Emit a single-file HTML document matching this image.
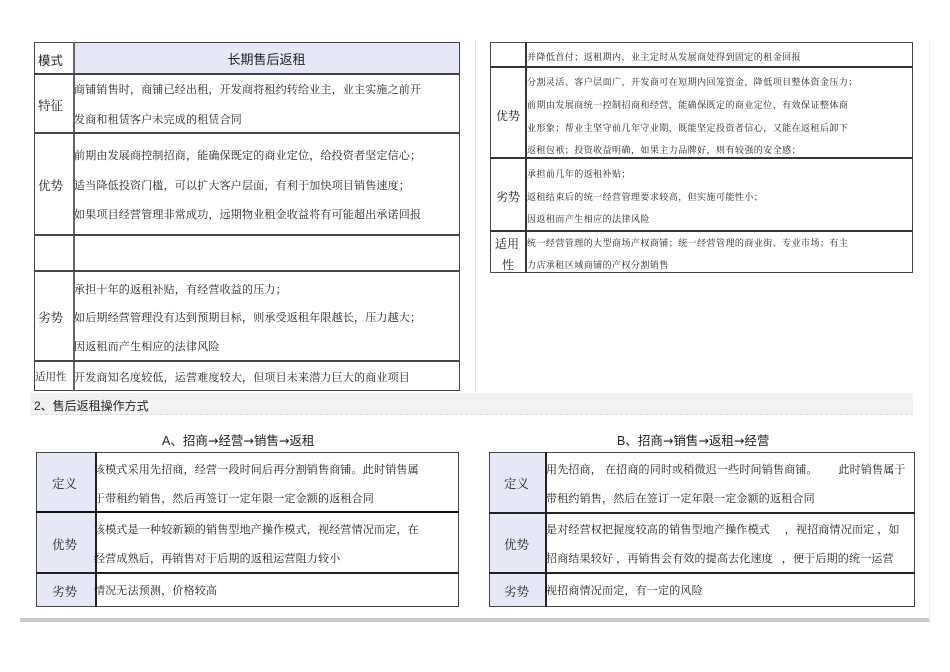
<!DOCTYPE html><html><head><meta charset="utf-8"><style>
body{margin:0;width:950px;height:672px;background:#fff;position:relative;overflow:hidden;font-family:"Liberation Serif","Noto Serif CJK SC",serif;color:#222}
.a{position:absolute;white-space:nowrap}
.b{position:absolute;border:1px solid #444;box-sizing:border-box}
.t{font-size:11px;letter-spacing:0.2px}
.s{font-size:9px;letter-spacing:0.45px}
.l{font-size:12.5px}
.h{font-family:"Liberation Sans","Noto Sans CJK SC",sans-serif}
</style></head><body>
<div class="a" style="left:475px;top:40px;width:1px;height:352px;background:#e6e6e6"></div>
<div class="b" style="left:34px;top:42px;width:426px;height:349px;border-width:1.5px"></div>
<div class="a" style="left:74px;top:43px;width:385px;height:30px;background:#e6e8f8"></div>
<div class="a" style="left:73px;top:42px;width:1.5px;height:349px;background:#666"></div>
<div class="a" style="left:34px;top:73px;width:426px;height:1.5px;background:#444"></div>
<div class="a" style="left:34px;top:132px;width:426px;height:1.5px;background:#444"></div>
<div class="a" style="left:34px;top:234px;width:426px;height:1.5px;background:#444"></div>
<div class="a" style="left:34px;top:270px;width:426px;height:1.5px;background:#444"></div>
<div class="a" style="left:34px;top:360px;width:426px;height:1.5px;background:#444"></div>
<div class="a l h" style="left:38px;top:50px">模式</div>
<div class="a h" style="left:74px;width:385px;top:49px;text-align:center;font-size:13px">长期售后返租</div>
<div class="a l" style="left:38px;top:96px">特征</div>
<div class="a t" style="left:74px;top:81px">商铺销售时，商铺已经出租，开发商将租约转给业主，业主实施之前开</div>
<div class="a t" style="left:74px;top:111px">发商和租赁客户未完成的租赁合同</div>
<div class="a l" style="left:38px;top:176px">优势</div>
<div class="a t" style="left:74px;top:147px">前期由发展商控制招商，能确保既定的商业定位，给投资者坚定信心；</div>
<div class="a t" style="left:74px;top:177px">适当降低投资门槛，可以扩大客户层面，有利于加快项目销售速度；</div>
<div class="a t" style="left:74px;top:206px">如果项目经营管理非常成功，远期物业租金收益将有可能超出承诺回报</div>
<div class="a l" style="left:38px;top:308px">劣势</div>
<div class="a t" style="left:74px;top:281px">承担十年的返租补贴，有经营收益的压力；</div>
<div class="a t" style="left:74px;top:309px">如后期经营管理没有达到预期目标，则承受返租年限越长，压力越大；</div>
<div class="a t" style="left:74px;top:338px">因返租而产生相应的法律风险</div>
<div class="a" style="left:35px;top:369px;font-size:10.5px">适用性</div>
<div class="a t" style="left:74px;top:369px">开发商知名度较低，运营难度较大，但项目未来潜力巨大的商业项目</div>
<div class="b" style="left:490px;top:42px;width:423px;height:231px;border-width:1.5px"></div>
<div class="a" style="left:525px;top:42px;width:1.5px;height:231px;background:#333"></div>
<div class="a" style="left:490px;top:66px;width:423px;height:1.5px;background:#333"></div>
<div class="a" style="left:490px;top:157px;width:423px;height:1.5px;background:#333"></div>
<div class="a" style="left:490px;top:230px;width:423px;height:1.5px;background:#333"></div>
<div class="a s" style="left:527px;top:50px">并降低首付；返租期内，业主定时从发展商处得到固定的租金回报</div>
<div class="a s" style="left:527px;top:75px">分割灵活、客户层面广，开发商可在短期内回笼资金，降低项目整体资金压力；</div>
<div class="a s" style="left:527px;top:98px">前期由发展商统一控制招商和经营，能确保既定的商业定位，有效保证整体商</div>
<div class="a s" style="left:527px;top:121px">业形象；帮业主坚守前几年守业期，既能坚定投资者信心，又能在返租后卸下</div>
<div class="a s" style="left:527px;top:143px">返租包袱；投资收益明确，如果主力品牌好，则有较强的安全感；</div>
<div class="a l" style="left:496px;top:107px;font-size:12px">优势</div>
<div class="a s" style="left:527px;top:167px">承担前几年的返租补贴；</div>
<div class="a s" style="left:527px;top:190px">返租结束后的统一经营管理要求较高，但实施可能性小；</div>
<div class="a s" style="left:527px;top:212px">因返租而产生相应的法律风险</div>
<div class="a l" style="left:496px;top:188px;font-size:12px">劣势</div>
<div class="a l" style="left:495px;top:235px;font-size:12px">适用</div>
<div class="a l" style="left:502px;top:256px;font-size:12px">性</div>
<div class="a s" style="left:527px;top:236px">统一经营管理的大型商场产权商铺；统一经营管理的商业街、专业市场；有主</div>
<div class="a s" style="left:527px;top:258px">力店承租区域商铺的产权分割销售</div>
<div class="a" style="left:30px;top:393px;width:883px;height:21px;background:#f2f2f2;border-bottom:1px dashed #ddd"></div>
<div class="a h" style="left:34px;top:397px;font-size:12px">2、售后返租操作方式</div>
<div class="a h" style="left:162px;top:430px;font-size:12.5px">A、招商<span style="font-family:'DejaVu Sans'">→</span>经营<span style="font-family:'DejaVu Sans'">→</span>销售<span style="font-family:'DejaVu Sans'">→</span>返租</div>
<div class="a h" style="left:617px;top:430px;font-size:12.5px">B、招商<span style="font-family:'DejaVu Sans'">→</span>销售<span style="font-family:'DejaVu Sans'">→</span>返租<span style="font-family:'DejaVu Sans'">→</span>经营</div>
<div class="b" style="left:36px;top:452px;width:423px;height:155px"></div>
<div class="a" style="left:37px;top:453px;width:58px;height:153px;background:#e6e8f8"></div>
<div class="a" style="left:95px;top:452px;width:1.5px;height:155px;background:#222"></div>
<div class="a" style="left:36px;top:511px;width:423px;height:2px;background:#111"></div>
<div class="a" style="left:36px;top:572px;width:423px;height:1.5px;background:#222"></div>
<div class="a l" style="left:52px;top:474px">定义</div>
<div class="a t" style="left:94px;top:461px">该模式采用先招商，经营一段时间后再分割销售商铺。此时销售属</div>
<div class="a t" style="left:94px;top:490px">于带租约销售，然后再签订一定年限一定金额的返租合同</div>
<div class="a l" style="left:52px;top:535px">优势</div>
<div class="a t" style="left:94px;top:521px">该模式是一种较新颖的销售型地产操作模式，视经营情况而定，在</div>
<div class="a t" style="left:94px;top:550px">经营成熟后，再销售对于后期的返租运营阻力较小</div>
<div class="a l" style="left:52px;top:582px">劣势</div>
<div class="a t" style="left:94px;top:582px">情况无法预测，价格较高</div>
<div class="b" style="left:489px;top:452px;width:426px;height:155px"></div>
<div class="a" style="left:490px;top:453px;width:55px;height:153px;background:#e6e8f8"></div>
<div class="a" style="left:545px;top:452px;width:1.5px;height:155px;background:#222"></div>
<div class="a" style="left:489px;top:512px;width:426px;height:1.5px;background:#222"></div>
<div class="a" style="left:489px;top:572px;width:426px;height:1.5px;background:#222"></div>
<div class="a l" style="left:504px;top:474px">定义</div>
<div class="a t" style="left:546px;top:461px">用先招商， 在招商的同时或稍微迟一些时间销售商铺。 &nbsp; &nbsp; &nbsp; 此时销售属于</div>
<div class="a t" style="left:546px;top:490px">带租约销售，然后在签订一定年限一定金额的返租合同</div>
<div class="a l" style="left:504px;top:535px">优势</div>
<div class="a t" style="left:546px;top:521px">是对经营权把握度较高的销售型地产操作模式 &nbsp; &nbsp; ，视招商情况而定 ，如</div>
<div class="a t" style="left:546px;top:550px">招商结果较好 ，再销售会有效的提高去化速度 &nbsp; ，便于后期的统一运营</div>
<div class="a l" style="left:504px;top:582px">劣势</div>
<div class="a t" style="left:546px;top:582px">视招商情况而定，有一定的风险</div>
<div class="a" style="left:20px;top:618px;width:910px;height:4px;background:#ccc"></div>
<div class="a" style="left:929px;top:40px;width:1px;height:580px;background:#eee"></div>
</body></html>
